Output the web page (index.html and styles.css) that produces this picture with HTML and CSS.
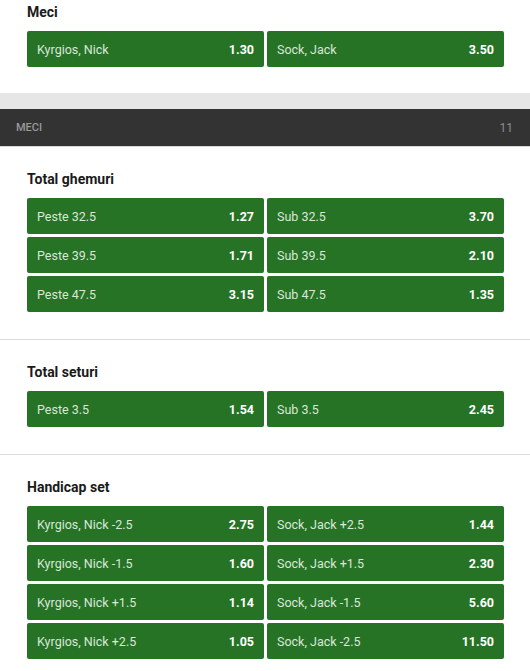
FILE: index.html
```html
<!DOCTYPE html>
<html>
<head>
<meta charset="utf-8">
<link rel="stylesheet" href="styles.css">
</head>
<body>
<div class="page">
  <section class="card top">
    <h3 class="title">Meci</h3>
    <div class="grid">
      <div class="odd"><span class="lbl">Kyrgios, Nick</span><span class="val">1.30</span></div>
      <div class="odd"><span class="lbl">Sock, Jack</span><span class="val">3.50</span></div>
    </div>
  </section>
  <div class="band"></div>
  <div class="bar"><span class="bar-t">MECI</span><span class="bar-n">11</span></div>
  <section class="card sec">
    <h3 class="title">Total ghemuri</h3>
    <div class="grid">
      <div class="odd"><span class="lbl">Peste 32.5</span><span class="val">1.27</span></div>
      <div class="odd"><span class="lbl">Sub 32.5</span><span class="val">3.70</span></div>
      <div class="odd"><span class="lbl">Peste 39.5</span><span class="val">1.71</span></div>
      <div class="odd"><span class="lbl">Sub 39.5</span><span class="val">2.10</span></div>
      <div class="odd"><span class="lbl">Peste 47.5</span><span class="val">3.15</span></div>
      <div class="odd"><span class="lbl">Sub 47.5</span><span class="val">1.35</span></div>
    </div>
  </section>
  <section class="card sec">
    <h3 class="title">Total seturi</h3>
    <div class="grid">
      <div class="odd"><span class="lbl">Peste 3.5</span><span class="val">1.54</span></div>
      <div class="odd"><span class="lbl">Sub 3.5</span><span class="val">2.45</span></div>
    </div>
  </section>
  <section class="card sec">
    <h3 class="title">Handicap set</h3>
    <div class="grid">
      <div class="odd"><span class="lbl">Kyrgios, Nick -2.5</span><span class="val">2.75</span></div>
      <div class="odd"><span class="lbl">Sock, Jack +2.5</span><span class="val">1.44</span></div>
      <div class="odd"><span class="lbl">Kyrgios, Nick -1.5</span><span class="val">1.60</span></div>
      <div class="odd"><span class="lbl">Sock, Jack +1.5</span><span class="val">2.30</span></div>
      <div class="odd"><span class="lbl">Kyrgios, Nick +1.5</span><span class="val">1.14</span></div>
      <div class="odd"><span class="lbl">Sock, Jack -1.5</span><span class="val">5.60</span></div>
      <div class="odd"><span class="lbl">Kyrgios, Nick +2.5</span><span class="val">1.05</span></div>
      <div class="odd"><span class="lbl">Sock, Jack -2.5</span><span class="val">11.50</span></div>
    </div>
  </section>
</div>
</body>
</html>
```

FILE: styles.css
```css
* { box-sizing: border-box; }
html, body { margin: 0; padding: 0; background: #ffffff; }
body { font-family: Roboto, "Liberation Sans", Arial, sans-serif; }
.page { width: 530px; }
.card { background: #fff; padding: 0 26px 0 27px; }
.top { padding-top: 2px; padding-bottom: 26px; border-radius: 0 0 3px 3px; }
.sec { padding-top: 22px; padding-bottom: 27px; border-bottom: 1px solid #dcdcdc; }
.sec:last-child { border-bottom: none; }
.title { margin: 0 0 9px 0; font-size: 14px; line-height: 20px; font-weight: 700; color: #1a1a1a; }
.grid { display: grid; grid-template-columns: 1fr 1fr; gap: 3px; }
.odd { height: 36px; background: #267326; border-radius: 2px; display: flex; align-items: center; justify-content: space-between; padding: 0 10px 0 10px; font-size: 12.5px; }
.lbl { color: #d9e6d9; }
.val { color: #fff; font-weight: 700; }
.band { height: 16px; background: #e6e6e6; }
.bar { height: 38px; background: #333333; display: flex; align-items: center; justify-content: space-between; padding: 0 17px 0 16px; border-bottom: 1px solid #d8d8d8; }
.bar-t { color: #9a9a9a; font-size: 11px; font-weight: 500; }
.bar-n { color: #8c8c8c; font-size: 12px; }
```
